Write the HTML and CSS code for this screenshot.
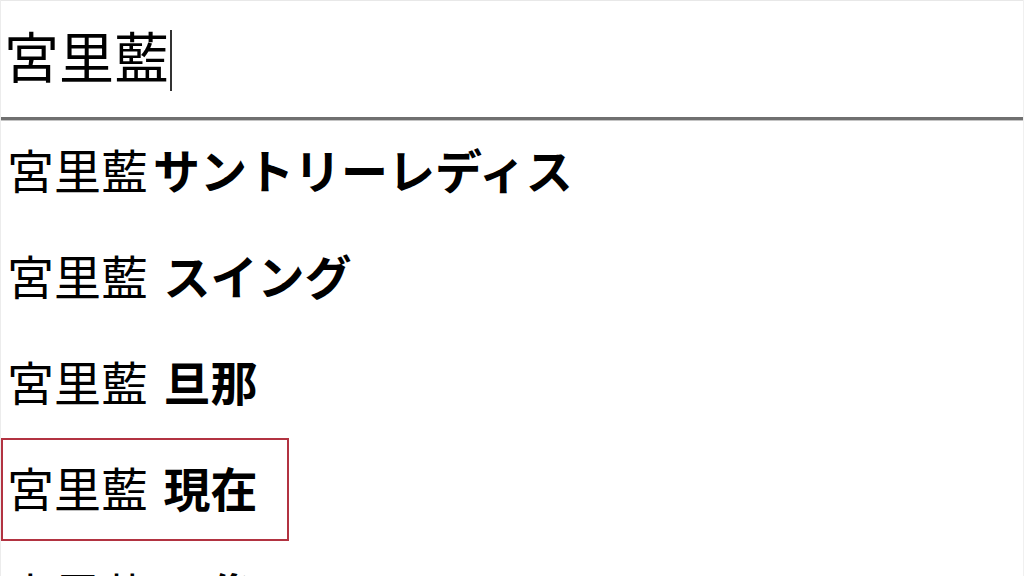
FILE: index.html
```html
<!DOCTYPE html>
<html lang="ja">
<head>
<meta charset="utf-8">
<title>検索候補</title>
<link rel="stylesheet" href="styles.css">
</head>
<body>
<div class="search">
  <div class="field"><span class="query">宮里藍</span><span class="caret"></span></div>
  <ul class="suggestions">
    <li class="item"><span class="base">宮里藍</span><b class="extra">サントリーレディス</b></li>
    <li class="item"><span class="base">宮里藍 </span><b class="extra">スイング</b></li>
    <li class="item"><span class="base">宮里藍 </span><b class="extra">旦那</b></li>
    <li class="item selected"><span class="base">宮里藍 </span><b class="extra">現在</b></li>
    <li class="item"><span class="base">宮里藍 </span><b class="extra">画像</b></li>
  </ul>
</div>
</body>
</html>
```
FILE: styles.css
```css
html, body {
  margin: 0;
  padding: 0;
  background: #ffffff;
}
body {
  width: 1024px;
  height: 576px;
  overflow: hidden;
  font-family: "Noto Sans CJK JP", "Noto Sans", sans-serif;
  color: #000000;
}
.search {
  box-sizing: border-box;
  height: 576px;
  border-left: 1px solid #ececec;
  border-right: 1px solid #f0f0f0;
}
.field {
  box-sizing: border-box;
  height: 120px;
  border-top: 1px solid #e8e8e8;
  border-bottom: 3px solid #707070;
  box-shadow: 0 1px 0 #c4c4c4;
  padding: 26px 0 0 3px;
  display: flex;
  align-items: flex-start;
}
.query {
  font-size: 55px;
  line-height: 55px;
  font-weight: 400;
}
.caret {
  width: 2px;
  height: 61px;
  margin-top: 3px;
  margin-left: 1px;
  background: #333333;
}
.suggestions {
  list-style: none;
  margin: 0;
  padding: 0;
}
.item {
  box-sizing: border-box;
  height: 103px;
  margin-bottom: 3px;
  padding-left: 6px;
  font-size: 47px;
  line-height: 98px;
  white-space: pre;
}
.base {
  font-weight: 400;
}
.extra {
  font-weight: 700;
  margin-left: 5px;
}
.selected {
  width: 288px;
  box-shadow: inset 0 0 0 2px #b23341;
}
```
